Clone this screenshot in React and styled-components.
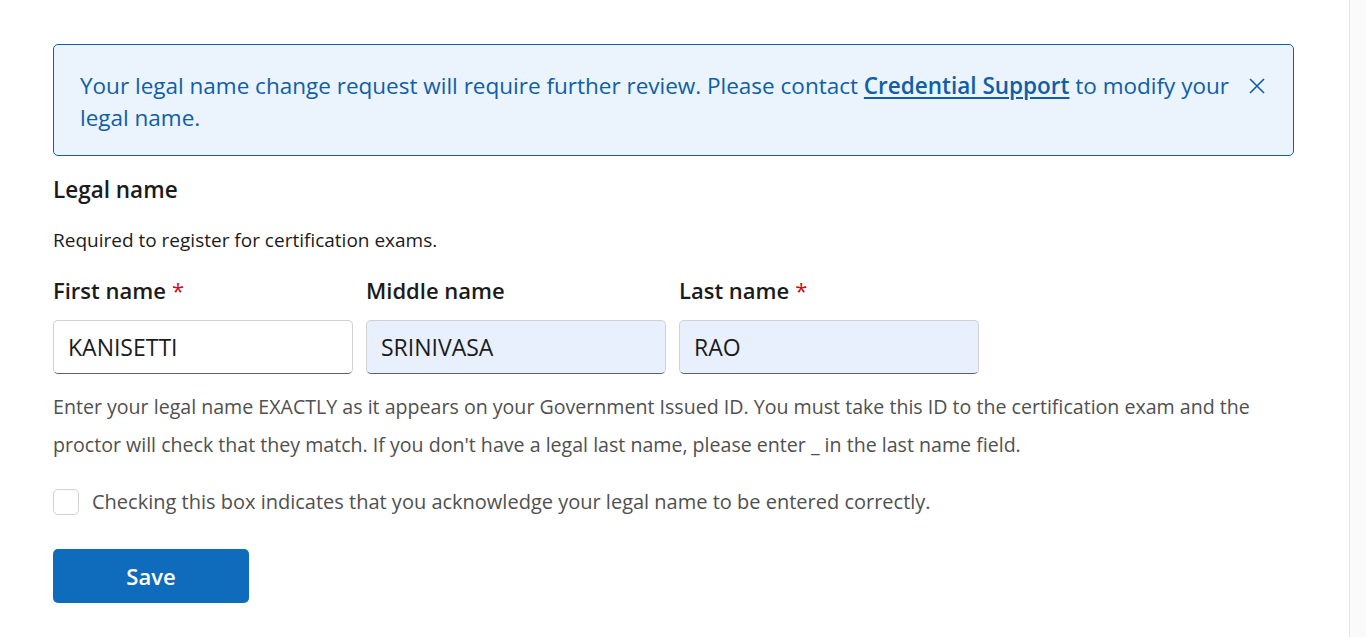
import React, { useState } from "react";
import styled, { createGlobalStyle } from "styled-components";

const Global = createGlobalStyle`
  html, body { margin: 0; padding: 0; background: #fff; }
  body { font-family: "Open Sans", "Noto Sans", sans-serif; }
  * { box-sizing: border-box; }
`;

const Shell = styled.div`
  display: flex;
  width: 1366px;
  height: 637px;
  overflow: hidden;
`;

const Main = styled.main`
  flex: 1;
  padding: 44px 55px 0 53px;
`;

const Gutter = styled.div`
  width: 17px;
  background: #fafafa;
  border-left: 1px solid #e6e6e6;
`;

const Alert = styled.div`
  display: flex;
  align-items: flex-start;
  gap: 14px;
  min-height: 112px;
  padding: 25px 26px 0 26px;
  background: #ebf3fc;
  border: 1px solid #0f5ea8;
  border-radius: 5px;
  color: #0f5ea8;
  font-size: 22.5px;
  line-height: 32px;
`;

const AlertText = styled.p`
  margin: 0;
  flex: 1;
`;

const AlertLink = styled.a`
  color: #0f5ea8;
  font-weight: 600;
  text-decoration: underline;
  text-underline-offset: 3px;
`;

const Close = styled.button`
  border: 0;
  background: none;
  padding: 0;
  margin-top: 6px;
  color: #0f5ea8;
  cursor: pointer;
  display: flex;
`;

const Heading = styled.h2`
  margin: 20px 0 0;
  font-size: 22.5px;
  font-weight: 600;
  line-height: 28px;
  color: #1b1b1b;
`;

const Sub = styled.p`
  margin: 24px 0 0;
  font-size: 19px;
  line-height: 24px;
  color: #1b1b1b;
`;

const Fields = styled.div`
  display: flex;
  gap: 13px;
  margin-top: 24px;
`;

const Field = styled.label`
  display: flex;
  flex-direction: column;
  width: 300px;
`;

const Label = styled.span`
  font-size: 22px;
  font-weight: 600;
  line-height: 28px;
  color: #1b1b1b;
  margin-bottom: 16px;
`;

const Req = styled.span`
  color: #c50f1f;
  font-weight: 400;
  margin-left: 6px;
`;

const Input = styled.input`
  height: 54px;
  width: 100%;
  padding: 0 14px;
  font: inherit;
  font-size: 23px;
  color: #1b1b1b;
  background: ${(p) => (p.$filled ? "#e8f0fe" : "#fff")};
  border: 1px solid #d1d1d1;
  border-bottom-color: #616161;
  border-radius: 5px;
  outline: none;
`;

const Help = styled.p`
  margin: 14px 0 0;
  font-size: 19.6px;
  line-height: 38px;
  color: #505050;
`;

const Check = styled.label`
  display: flex;
  align-items: center;
  gap: 13px;
  margin-top: 24px;
  font-size: 20px;
  color: #505050;
  cursor: pointer;
`;

const Box = styled.span`
  width: 26px;
  height: 26px;
  border: 1px solid #d1d1d1;
  border-radius: 5px;
  background: #fff;
  flex: none;
`;

const Save = styled.button`
  margin-top: 34px;
  width: 196px;
  height: 54px;
  border: 0;
  border-radius: 5px;
  background: #0f6cbd;
  color: #fff;
  font: inherit;
  font-size: 22px;
  font-weight: 600;
  cursor: pointer;
`;

export default function App() {
  const [first, setFirst] = useState("KANISETTI");
  const [middle, setMiddle] = useState("SRINIVASA");
  const [last, setLast] = useState("RAO");
  return (
    <Shell>
      <Global />
      <Main>
        <Alert>
          <AlertText>
            Your legal name change request will require further review. Please contact{" "}
            <AlertLink href="#">Credential Support</AlertLink> to modify your legal name.
          </AlertText>
          <Close aria-label="Close">
            <svg width="20" height="20" viewBox="0 0 20 20" fill="none" stroke="currentColor" strokeWidth="1.6">
              <path d="M3 3 L17 17 M17 3 L3 17" />
            </svg>
          </Close>
        </Alert>
        <Heading>Legal name</Heading>
        <Sub>Required to register for certification exams.</Sub>
        <Fields>
          <Field>
            <Label>First name<Req>*</Req></Label>
            <Input value={first} onChange={(e) => setFirst(e.target.value)} />
          </Field>
          <Field>
            <Label>Middle name</Label>
            <Input $filled value={middle} onChange={(e) => setMiddle(e.target.value)} />
          </Field>
          <Field>
            <Label>Last name<Req>*</Req></Label>
            <Input $filled value={last} onChange={(e) => setLast(e.target.value)} />
          </Field>
        </Fields>
        <Help>
          Enter your legal name EXACTLY as it appears on your Government Issued ID. You must take this ID to the certification exam and the proctor will check that they match. If you don't have a legal last name, please enter _ in the last name field.
        </Help>
        <Check>
          <Box />
          Checking this box indicates that you acknowledge your legal name to be entered correctly.
        </Check>
        <Save>Save</Save>
      </Main>
      <Gutter />
    </Shell>
  );
}
